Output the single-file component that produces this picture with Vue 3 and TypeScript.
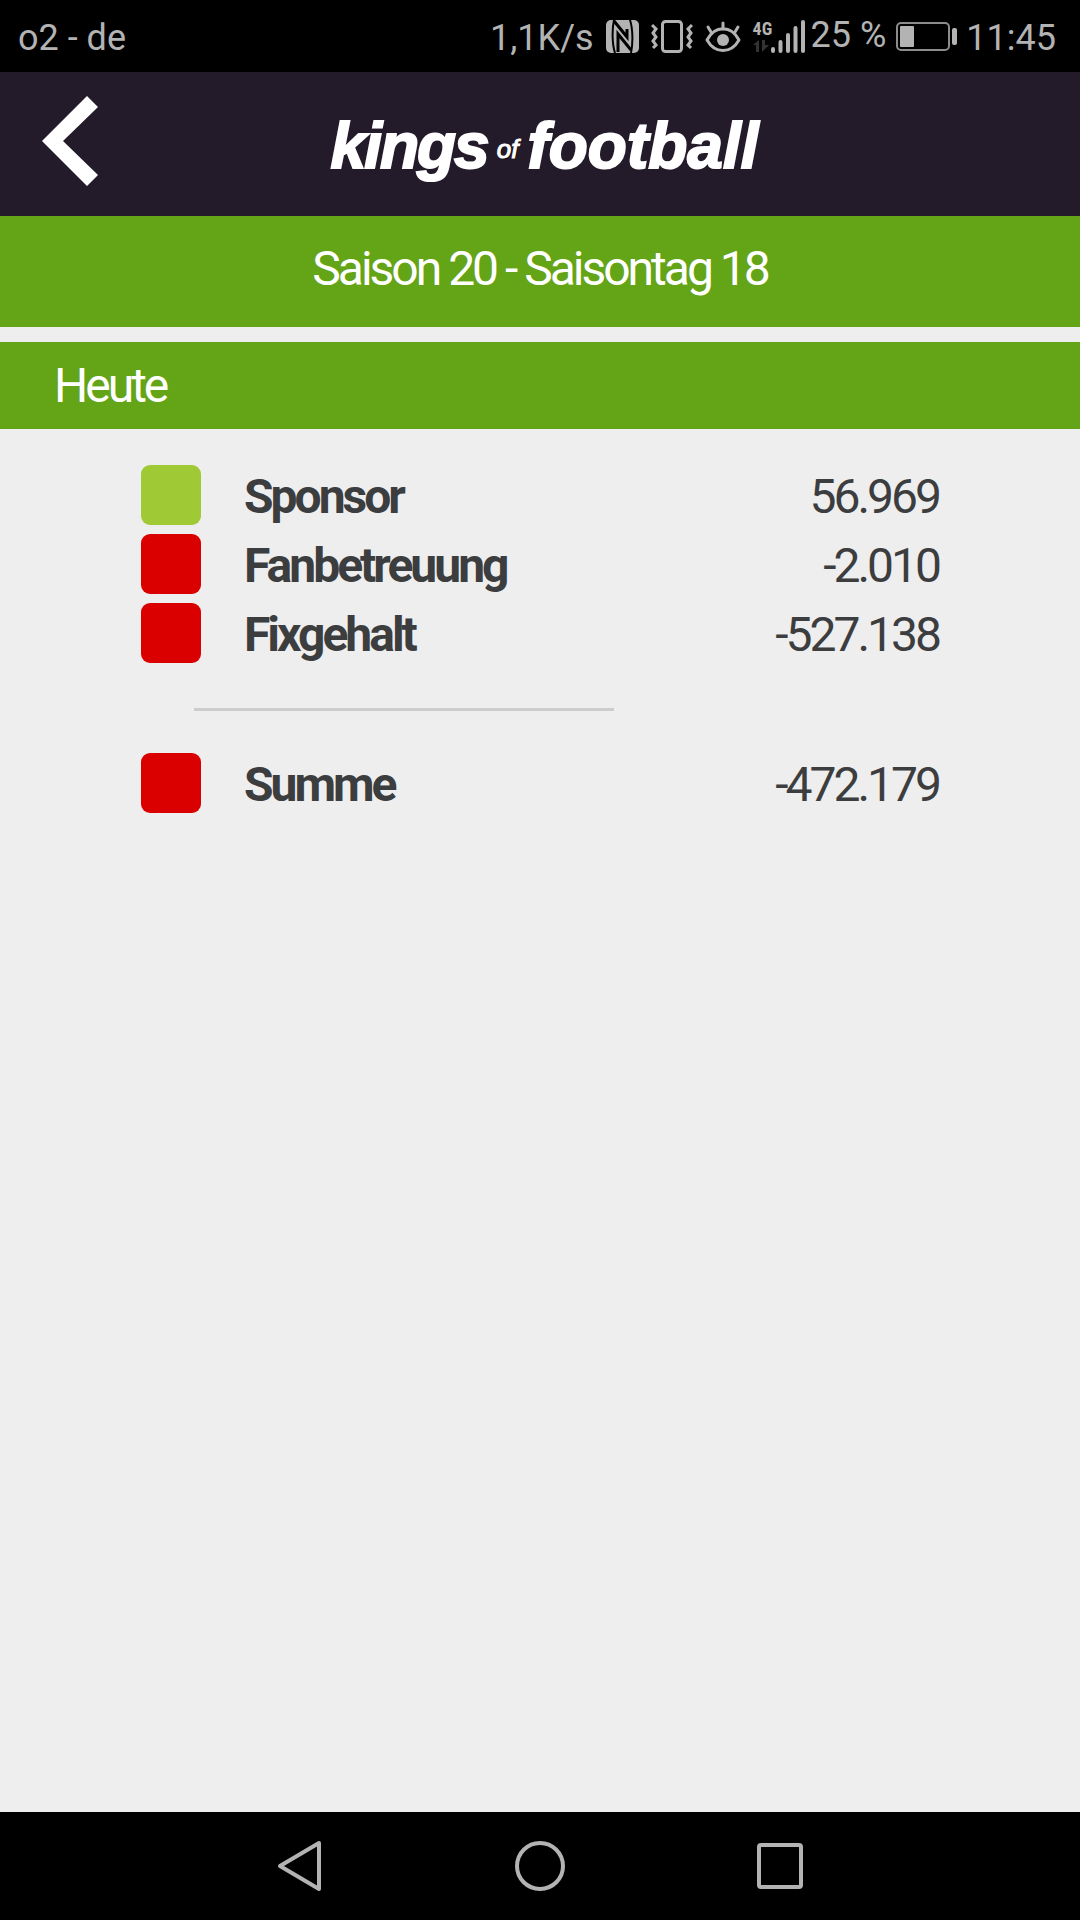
<script setup lang="ts">
interface Entry {
  label: string
  amount: string
  gain: boolean
}

const entries: Entry[] = [
  { label: 'Sponsor', amount: '56.969', gain: true },
  { label: 'Fanbetreuung', amount: '-2.010', gain: false },
  { label: 'Fixgehalt', amount: '-527.138', gain: false },
]
const total: Entry = { label: 'Summe', amount: '-472.179', gain: false }
</script>

<template>
  <div class="screen">
    <div class="status">
      <span class="carrier">o2 - de</span>
      <span class="speed">1,1K/s</span>
      <svg class="icon" width="33" height="33" viewBox="0 0 33 33" aria-hidden="true">
        <rect width="33" height="33" rx="5" fill="#b3b3b3" />
        <path d="M8 0 C6 9 6 24 9 33 M24 0 C27 9 27 24 25 33" fill="none" stroke="#000" stroke-width="2" />
        <path d="M8 1 L21 17 V9 M12 32 V14 L25 30" fill="none" stroke="#000" stroke-width="3" />
      </svg>
      <svg class="icon" width="42" height="33" viewBox="0 0 42 33" aria-hidden="true" fill="none" stroke="#b3b3b3">
        <rect x="11.500" y="1.500" width="19" height="30" rx="3" stroke-width="3" />
        <path d="M1 5 L5 9 L2 13 L5 17 L2 21 L5 25 L2 28 M41 5 L37 9 L40 13 L37 17 L40 21 L37 25 L40 28" stroke-width="3" />
      </svg>
      <svg class="icon" width="36" height="33" viewBox="0 0 36 33" aria-hidden="true" fill="none" stroke="#b3b3b3" stroke-width="3" stroke-linecap="round">
        <path d="M2 20 C10 5 26 5 34 20 C26 34 10 34 2 20 Z" stroke-linejoin="round" />
        <circle cx="18" cy="20" r="6" fill="#b3b3b3" stroke="none" />
        <path d="M18 3 V9 M3 7 L6 12 M33 7 L30 12" />
      </svg>
      <span class="network">
        <span class="generation">4G</span>
        <svg width="18" height="12" viewBox="0 0 18 12" aria-hidden="true" fill="#333">
          <path d="M0 5 L6 0 V12 H3 V5 Z M9 0 H12 V5 H16 L9 12 Z" />
        </svg>
      </span>
      <svg class="signal" width="34" height="33" viewBox="0 0 34 33" aria-hidden="true" stroke="#b3b3b3" stroke-width="4" stroke-linecap="round">
        <path d="M2 29 V31 M9.500 22 V31 M17 15 V31 M24.500 8 V31 M32 2 V31" />
      </svg>
      <span class="percent">25 %</span>
      <svg class="battery" width="61" height="29" viewBox="0 0 61 29" aria-hidden="true">
        <rect x="1" y="1" width="52" height="27" rx="4" fill="none" stroke="#8c8c8c" stroke-width="2" />
        <rect x="4" y="4" width="14" height="21" rx="1" fill="#b3b3b3" />
        <rect x="56" y="6" width="5" height="17" rx="2" fill="#b3b3b3" />
      </svg>
      <span class="clock">11:45</span>
    </div>

    <header class="header">
      <button class="back" type="button" aria-label="Zurück">
        <svg width="56" height="90" viewBox="0 0 56 90" aria-hidden="true">
          <path d="M45 0 L56 11 L21 45 L56 79 L45 90 L0 45 Z" fill="#fff" />
        </svg>
      </button>
      <div class="logo"><span class="kings">kings</span><small>of</small><span>football</span></div>
    </header>

    <main class="content">
      <h1 class="season">Saison 20 - Saisontag 18</h1>
      <h2 class="day">Heute</h2>
      <table class="ledger">
        <tbody>
          <tr v-for="entry in entries" :key="entry.label">
            <td class="mark"><div class="swatch" :class="{ gain: entry.gain }"></div></td>
            <th scope="row">{{ entry.label }}</th>
            <td class="amount">{{ entry.amount }}</td>
          </tr>
        </tbody>
        <tfoot>
          <tr>
            <td colspan="3"><hr /></td>
          </tr>
          <tr>
            <td class="mark"><div class="swatch" :class="{ gain: total.gain }"></div></td>
            <th scope="row">{{ total.label }}</th>
            <td class="amount">{{ total.amount }}</td>
          </tr>
        </tfoot>
      </table>
    </main>

    <nav class="keys">
      <button type="button" aria-label="Zurück">
        <svg width="50" height="54" viewBox="0 0 50 54" aria-hidden="true">
          <path d="M44 4 V50 L5 27 Z" />
        </svg>
      </button>
      <button type="button" aria-label="Startseite">
        <svg width="50" height="54" viewBox="0 0 50 54" aria-hidden="true">
          <circle cx="25" cy="27" r="23" />
        </svg>
      </button>
      <button type="button" aria-label="Übersicht">
        <svg width="50" height="54" viewBox="0 0 50 54" aria-hidden="true">
          <rect x="4" y="6" width="42" height="42" rx="2" />
        </svg>
      </button>
    </nav>
  </div>
</template>

<style>
body {
  margin: 0;
  background: #eee;
}
</style>

<style scoped>
.screen {
  display: flex;
  flex-direction: column;
  min-height: 100vh;
  background: #eee;
  color: #3c3d3f;
  font-family: Roboto, 'Noto Sans', sans-serif;
}

button {
  display: flex;
  align-items: center;
  justify-content: center;
  padding: 0;
  border: 0;
  background: none;
}

.status {
  display: flex;
  align-items: center;
  height: 72px;
  padding: 0 24px 0 18px;
  background: #000;
  color: #b3b3b3;
  font-size: 36px;
  line-height: 42px;
  white-space: nowrap;
}

.carrier {
  flex: 1;
}

.carrier,
.speed,
.clock {
  padding-top: 3px;
}

.icon {
  margin-left: 12px;
}

.network {
  display: flex;
  flex-direction: column;
  width: 18px;
  height: 36px;
  margin-left: 12px;
}

.generation {
  height: 22px;
  font: bold 18px/22px 'Roboto Condensed', Roboto, sans-serif;
}

.percent {
  margin-left: 6px;
  padding-bottom: 3px;
}

.battery {
  margin: 0 9px 0 10px;
}

.header {
  display: grid;
  grid-template-columns: 140px 1fr 140px;
  align-items: center;
  height: 144px;
  background: #241b2a;
  color: #fff;
}

.back {
  height: 144px;
  padding-bottom: 6px;
}

.logo {
  padding: 3px 0 0 9px;
  font: italic bold 64px/72px 'Liberation Sans', sans-serif;
  text-align: center;
  white-space: nowrap;
  -webkit-text-stroke: 2px #fff;
}

.kings {
  letter-spacing: -2px;
}

.logo small {
  margin: 0 9px;
  font-size: 26px;
  font-weight: 400;
  line-height: 26px;
  vertical-align: 10px;
  text-shadow: 1px 1px 1px #000;
  -webkit-text-stroke: 1px #fff;
}

.content {
  flex: 1;
}

.season,
.day {
  margin: 0;
  background: #64a417;
  color: #fff;
  font-size: 48px;
  font-weight: 400;
  line-height: 69px;
  letter-spacing: -3px;
}

.season {
  padding: 18px 0 24px;
  text-align: center;
}

.day {
  margin-top: 15px;
  padding: 9px 54px;
}

.ledger {
  width: calc(100% - 282px);
  margin: 33px 141px 0;
  border-collapse: collapse;
  font-size: 48px;
  line-height: 69px;
  letter-spacing: -3px;
}

.ledger td,
.ledger th {
  padding: 0;
}

.ledger th {
  text-align: left;
}

.ledger .mark {
  width: 103px;
}

.swatch {
  width: 60px;
  height: 60px;
  margin-bottom: 3px;
  border-radius: 9px;
  background: #da0000;
}

.swatch.gain {
  background: #a0c936;
}

.ledger .amount {
  text-align: right;
}

hr {
  width: 420px;
  height: 3px;
  margin: 39px 53px;
  border: 0;
  background: #ccc;
}

.keys {
  display: grid;
  grid-template-columns: repeat(3, 240px);
  justify-content: center;
  height: 108px;
  background: #000;
}

.keys svg {
  fill: none;
  stroke: #b3b3b3;
  stroke-width: 4;
  stroke-linejoin: round;
}
</style>
